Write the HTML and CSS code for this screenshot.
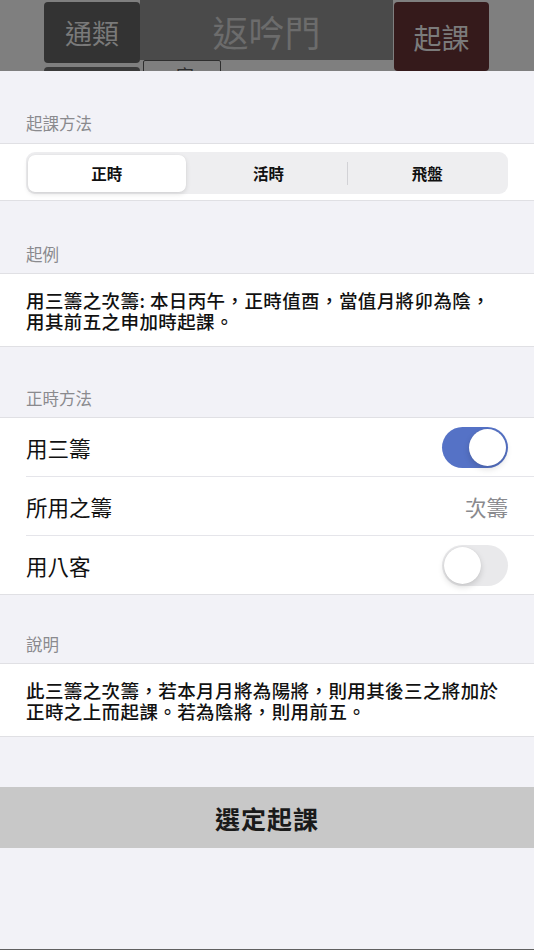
FILE: index.html
```html
<!DOCTYPE html>
<html lang="zh-Hant">
<head>
<meta charset="utf-8">
<title>起課</title>
<link rel="stylesheet" href="styles.css">
</head>
<body>
<div class="screen">
  <div class="backdrop">
    <div class="col col-left">
      <div class="tile tile-dark">通類</div>
      <div class="tile tile-dark tile-next"></div>
    </div>
    <div class="col col-mid">
      <div class="title-box">返吟門</div>
      <div class="mini-box">一 宮</div>
    </div>
    <div class="col col-right">
      <div class="tile tile-red">起課</div>
    </div>
  </div>

  <div class="sheet">
    <div class="sec-head first">起課方法</div>
    <div class="group seg-group">
      <div class="segmented">
        <div class="seg active">正時</div>
        <div class="seg">活時</div>
        <div class="seg sep">飛盤</div>
      </div>
    </div>

    <div class="sec-head wide">起例</div>
    <div class="group text-group">
      <p class="para">用三籌之次籌: 本日丙午，正時值酉，當值月將卯為陰，<br>用其前五之申加時起課。</p>
    </div>

    <div class="sec-head">正時方法</div>
    <div class="group list-group">
      <div class="row">
        <span class="row-label">用三籌</span>
        <span class="toggle on"><span class="knob"></span></span>
      </div>
      <div class="row">
        <span class="row-label">所用之籌</span>
        <span class="row-value">次籌</span>
      </div>
      <div class="row last">
        <span class="row-label">用八客</span>
        <span class="toggle"><span class="knob"></span></span>
      </div>
    </div>

    <div class="sec-head narrow">說明</div>
    <div class="group text-group">
      <p class="para">此三籌之次籌，若本月月將為陽將，則用其後三之將加於<br>正時之上而起課。若為陰將，則用前五。</p>
    </div>

    <div class="action">選定起課</div>
  </div>
</div>
</body>
</html>
```

FILE: styles.css
```css
* { box-sizing: border-box; }

html, body {
  margin: 0;
  padding: 0;
}

body {
  background: #606060;
  font-family: "Noto Sans CJK TC", "Noto Sans CJK SC", "Noto Sans", sans-serif;
}

.screen {
  width: 534px;
  height: 950px;
  overflow: hidden;
  background: #606060;
}

/* dimmed backdrop */
.backdrop {
  height: 71px;
  overflow: hidden;
  background: #7f7f7f;
  display: flex;
  padding-left: 44px;
}

.col {
  display: flex;
  flex-direction: column;
}

.col-left { width: 96px; }
.col-mid { width: 253px; }
.col-right { width: 95px; margin-left: 1px; }

.tile {
  border-radius: 4px;
  display: flex;
  align-items: center;
  justify-content: center;
  flex-shrink: 0;
}

.tile-dark {
  margin-top: 2px;
  height: 61px;
  background: #333333;
  color: #7a7a7a;
  font-size: 27px;
}

.tile-next {
  margin-top: 4px;
  height: 20px;
  background: #3a3a3a;
}

.title-box {
  height: 60px;
  flex-shrink: 0;
  background: #4a4a4a;
  color: #6c6c6c;
  font-size: 36px;
  display: flex;
  align-items: center;
  justify-content: center;
  padding-top: 2px;
}

.mini-box {
  margin-left: 3px;
  width: 78px;
  height: 30px;
  flex-shrink: 0;
  border: 1.5px solid #2e2e2e;
  border-radius: 2px;
  color: #2e2e2e;
  font-size: 18px;
  line-height: 24px;
  padding-left: 10px;
  padding-top: 2px;
}

.tile-red {
  margin-top: 2px;
  height: 69px;
  background: #351a1b;
  color: #7b7b7b;
  font-size: 28px;
}

/* sheet */
.sheet {
  height: 878px;
  background: #f2f2f7;
  padding-top: 1px;
}

.sec-head {
  padding: 41px 26px 9px;
  font-size: 16.5px;
  line-height: 20px;
  color: #8a8a8e;
}

.sec-head.first {
  padding-top: 41px;
  padding-bottom: 10px;
}

.sec-head.wide {
  padding-top: 43px;
}

.sec-head.narrow {
  padding-top: 39px;
}

.group {
  background: #ffffff;
  border-top: 1px solid #e0e0e4;
  border-bottom: 1px solid #e0e0e4;
}

.seg-group {
  padding: 8px 26px 6px;
}

.segmented {
  height: 42px;
  border-radius: 9px;
  background: #eeeef0;
  padding: 2.5px 2px;
  display: flex;
}

.seg {
  flex: 1;
  display: flex;
  align-items: center;
  justify-content: center;
  font-size: 15.5px;
  font-weight: 700;
  color: #111111;
}

.seg.active {
  background: #ffffff;
  border-radius: 7px;
  box-shadow: 0 2px 5px rgba(0, 0, 0, 0.12), 0 0 1px rgba(0, 0, 0, 0.08);
  margin-right: 4px;
}

.seg.sep {
  border-left: 1px solid #d2d2d6;
  margin: 7px 0;
}

.text-group {
  padding: 16px 26px 14px;
}

.para {
  margin: 0;
  font-size: 18.5px;
  line-height: 21px;
  font-weight: 500;
  color: #111111;
  letter-spacing: 0.4px;
  white-space: nowrap;
}

.list-group {
  padding-left: 26px;
}

.row {
  height: 59px;
  display: flex;
  align-items: center;
  justify-content: space-between;
  padding-right: 26px;
  border-bottom: 1px solid #e5e5ea;
}

.row.last {
  height: 58px;
  border-bottom: none;
}

.row-label {
  font-size: 21.5px;
  color: #111111;
}

.row-value {
  font-size: 21.5px;
  color: #8a8a8e;
}

.toggle {
  width: 66px;
  height: 41px;
  border-radius: 21px;
  background: #e9e9eb;
  padding: 2px;
  display: flex;
  justify-content: flex-start;
}

.toggle.on {
  background: #5572c6;
  justify-content: flex-end;
}

.knob {
  width: 37px;
  height: 37px;
  border-radius: 50%;
  background: #ffffff;
  box-shadow: 0 3px 6px rgba(0, 0, 0, 0.15), 0 0 1px rgba(0, 0, 0, 0.12);
}

.action {
  margin-top: 50px;
  height: 61px;
  background: #c8c8c8;
  display: flex;
  align-items: center;
  justify-content: center;
  font-size: 25px;
  font-weight: 700;
  color: #1a1a1a;
  letter-spacing: 1px;
}
```
